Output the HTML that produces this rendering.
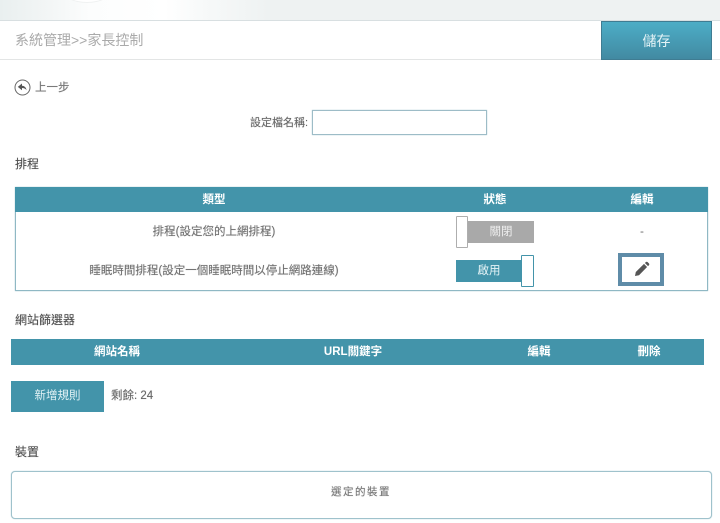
<!DOCTYPE html>
<html lang="zh-Hant">
<head>
<meta charset="utf-8">
<title>家長控制</title>
<style>
html,body{margin:0;padding:0;background:#fff;}
body{position:relative;width:720px;height:523px;overflow:hidden;font-family:"Liberation Sans","Noto Sans CJK TC",sans-serif;color:#666;}
div,span,input,svg{position:absolute;box-sizing:border-box;}
.t{white-space:nowrap;line-height:16px;height:16px;text-shadow:0 0 .6px rgba(90,90,90,.55);}
.c{transform:translateX(-50%);}
.h{font-size:11.5px;font-weight:700;color:#fff;text-shadow:none;}
.w{text-shadow:none;}
.sec{font-size:12px;color:#4d4d4d;left:15px;}
</style>
</head>
<body>
<div style="left:0;top:0;width:720px;height:20px;background:linear-gradient(90deg,#e9efef 0,#f3f6f6 50px,#fcfdfd 90px,#fff 165px,#f7f9f9 205px,#eef2f2 270px,#eef2f2 720px);"></div>
<div style="left:62px;top:-24px;width:50px;height:27px;border-radius:50%;background:#fff;border:1px solid #f0f2f2;"></div>
<div style="left:0;top:20px;width:720px;height:1px;background:#d8dfe1;"></div>
<div style="left:0;top:59px;width:720px;height:1px;background:#e3e5e5;"></div>
<div class="t w" style="left:15px;top:32px;font-size:14px;color:#aaa;">系統管理&gt;&gt;家長控制</div>
<div style="left:601px;top:21px;width:111px;height:39px;background:linear-gradient(180deg,#4cadc6,#428aa2);border:1px solid #3f7c92;"></div>
<div class="t c w" style="left:656.5px;top:33px;font-size:14px;color:#e4f3f6;">儲存</div>

<svg style="left:14px;top:79px;" width="17" height="17" viewBox="0 0 17 17">
<circle cx="8.5" cy="8.5" r="7.5" fill="none" stroke="#666" stroke-width="1"/>
<path d="M8 4.5 3.8 7.9 8 11.2V9c2 0 3.4.6 4.5 2.2C12.2 8.8 10.8 7 8 6.8Z" fill="#555"/>
</svg>
<div class="t" style="left:35px;top:80px;font-size:11.5px;color:#777;">上一步</div>

<div class="t" style="left:250px;top:115px;font-size:11px;color:#666;">設定檔名稱:</div>
<div style="left:312px;top:110px;width:175px;height:25px;border:1px solid #9dbcc7;box-shadow:0 0 1px #a3c3cd;background:#fff;"></div>

<div class="t sec" style="top:156px;">排程</div>

<div style="left:15px;top:187px;width:693px;height:104px;border:1px solid #8fb8c4;box-shadow:0 0 1px #92bac6;background:#fff;"></div>
<div style="left:15px;top:187px;width:693px;height:25px;background:#4394aa;"></div>
<div class="t c h" style="left:214px;top:192px;">類型</div>
<div class="t c h" style="left:495px;top:192px;">狀態</div>
<div class="t c h" style="left:642px;top:192px;">編輯</div>

<div class="t c" style="left:214px;top:224px;font-size:11.5px;color:#707070;">排程(設定您的上網排程)</div>
<div class="t c" style="left:214px;top:263px;font-size:11.5px;color:#707070;">睡眠時間排程(設定一個睡眠時間以停止網路連線)</div>

<div style="left:456px;top:221px;width:78px;height:22px;background:#a9a9a9;"></div>
<div class="t c w" style="left:501px;top:224px;font-size:11.5px;color:#eee;">關閉</div>
<div style="left:456px;top:216px;width:12px;height:32px;background:#fff;border:1px solid #aeaeae;border-radius:1px;"></div>

<div style="left:456px;top:260px;width:78px;height:22px;background:#4394aa;"></div>
<div class="t c w" style="left:489px;top:263px;font-size:11.5px;color:#e4f3f6;">啟用</div>
<div style="left:521px;top:255px;width:13px;height:32px;background:#fff;border:1px solid #4394aa;border-radius:1px;"></div>

<div class="t c" style="left:642px;top:224px;font-size:11px;color:#777;">-</div>
<div style="left:618px;top:253px;width:46px;height:33px;border:4px solid #5f8ca8;background:#fff;"></div>
<svg style="left:634px;top:261px;" width="16" height="16" viewBox="0 0 16 16">
<path d="M1 15 1.8 11 10 2.9 13.1 6 5 14.2Z" fill="#555"/>
<path d="M10.9 2 11.9 1C12.4.6 13 .6 13.5 1L15 2.5C15.4 3 15.4 3.6 15 4.1L14 5.1Z" fill="#555"/>
</svg>

<div class="t sec" style="top:312px;">網站篩選器</div>
<div style="left:11px;top:339px;width:693px;height:26px;background:#4394aa;"></div>
<div class="t c h" style="left:117px;top:344px;">網站名稱</div>
<div class="t c h" style="left:353px;top:344px;">URL關鍵字</div>
<div class="t c h" style="left:539px;top:344px;">編輯</div>
<div class="t c h" style="left:649px;top:344px;">刪除</div>

<div style="left:11px;top:381px;width:93px;height:31px;background:#4394aa;"></div>
<div class="t c w" style="left:57.5px;top:388px;font-size:11.5px;color:#e4f3f6;">新增規則</div>
<div class="t" style="left:111px;top:388px;font-size:11.5px;color:#666;">剩餘: 24</div>

<div class="t sec" style="top:444px;">裝置</div>
<div style="left:11px;top:471px;width:701px;height:48px;border:1px solid #9fc2cc;box-shadow:0 0 1px #a3c5ce;border-radius:4px;background:#fff;"></div>
<div class="t c" style="left:361px;top:484px;font-size:10.5px;letter-spacing:1.5px;color:#777;">選定的裝置</div>
</body>
</html>
